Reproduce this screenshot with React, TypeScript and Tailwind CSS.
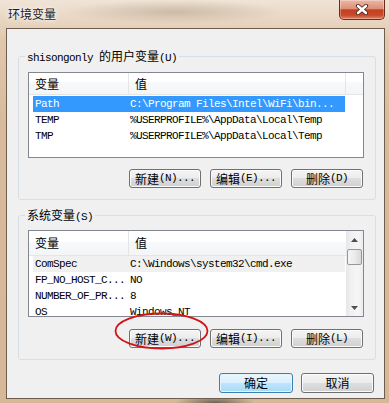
import React from "react";

const MONO = "font-['Liberation_Mono',monospace] text-[11px] tracking-[-0.6px]";
const CJK = "font-['Noto_Sans_CJK_SC',sans-serif] text-[12px]";

// ascii runs in mono, chinese runs in the CJK face (SimSun-ish widths)
function Txt({ s }: { s: string }) {
  const parts = s.match(/[\u3400-\u9fff]+|[^\u3400-\u9fff]+/g) ?? [];
  return (
    <>
      {parts.map((p, i) =>
        /[\u3400-\u9fff]/.test(p) ? (
          <span key={i} className={CJK}>
            {p}
          </span>
        ) : (
          <span key={i} className={MONO}>
            {p}
          </span>
        )
      )}
    </>
  );
}

function Btn({ label, primary = false, className = "" }: { label: string; primary?: boolean; className?: string }) {
  const look = primary
    ? "border-[#3c7fb1] bg-[linear-gradient(to_bottom,#eaf6fd_0%,#d9f0fc_50%,#bee6fd_50%,#a7d9f5_100%)] shadow-[inset_0_0_0_1px_#e4f4fd]"
    : "border-[#707070] bg-[linear-gradient(to_bottom,#f4f4f4_0%,#ececec_50%,#dedede_50%,#d0d0d0_100%)] shadow-[inset_0_0_0_1px_#fbfbfb]";
  return (
    <button
      type="button"
      className={`flex items-center justify-center rounded-[3px] border text-black leading-none whitespace-nowrap ${look} ${className}`}
    >
      <Txt s={label} />
    </button>
  );
}

function ScrollBar() {
  return (
    <div className="w-[17px] shrink-0 flex flex-col bg-[linear-gradient(to_right,#e6e6e6,#f1f1f1_30%,#f6f6f6_70%,#ececec)]">
      <div className="h-[17px] shrink-0 flex items-center justify-center">
        <svg width="7" height="4" viewBox="0 0 7 4">
          <path d="M0 4 L3.5 0 L7 4Z" fill="#505050" />
        </svg>
      </div>
      <div className="flex-1 pt-[1px]">
        <div className="mx-[1px] h-[16px] rounded-[2px] border border-[#979797] bg-[linear-gradient(to_right,#f5f5f5,#ebebeb_50%,#d9d9d9)]" />
      </div>
      <div className="h-[17px] shrink-0 flex items-center justify-center">
        <svg width="7" height="4" viewBox="0 0 7 4">
          <path d="M0 0 L3.5 4 L7 0Z" fill="#505050" />
        </svg>
      </div>
    </div>
  );
}

type Row = [string, string];

function VarList({
  rows,
  sel,
  active,
  scroll,
  heightCls,
  headerCls,
  rowsCls,
}: {
  rows: Row[];
  sel: number;
  active: boolean;
  scroll: boolean;
  heightCls: string;
  headerCls: string;
  rowsCls: string;
}) {
  return (
    <div className={`ml-[9px] w-[336px] ${heightCls} flex overflow-hidden border border-[#828790] bg-white`}>
      <div className="flex min-w-0 flex-1 flex-col">
        <div
          className={`flex shrink-0 ${headerCls} border-b border-[#e5e5e5] bg-[linear-gradient(to_bottom,#ffffff_0%,#ffffff_45%,#f8f9fa_45%,#f4f5f7_100%)]`}
        >
          <div className="flex w-[100px] items-center border-r border-[#e5e5e5] pl-[6px] leading-none">
            <span className={CJK}>变量</span>
          </div>
          <div
            className={`flex items-center pl-[6px] leading-none ${scroll ? "flex-1" : "w-[217px] border-r border-[#e5e5e5]"}`}
          >
            <span className={CJK}>值</span>
          </div>
        </div>
        <div className={rowsCls}>
          {rows.map(([n, v], i) => (
            <div
              key={n}
              className={`ml-[4px] flex h-[16px] w-[312px] items-center whitespace-nowrap leading-none ${
                i === sel ? (active ? "bg-[#3399ff] text-white" : "bg-[#f0f0f0] text-black") : "text-black"
              }`}
            >
              <div className={`w-[96px] shrink-0 pl-[2px] ${MONO}`}>{n}</div>
              <div className={`pl-[1px] ${MONO}`}>{v}</div>
            </div>
          ))}
        </div>
      </div>
      {scroll && <ScrollBar />}
    </div>
  );
}

const userRows: Row[] = [
  ["Path", "C:\\Program Files\\Intel\\WiFi\\bin..."],
  ["TEMP", "%USERPROFILE%\\AppData\\Local\\Temp"],
  ["TMP", "%USERPROFILE%\\AppData\\Local\\Temp"],
];

const sysRows: Row[] = [
  ["ComSpec", "C:\\Windows\\system32\\cmd.exe"],
  ["FP_NO_HOST_C...", "NO"],
  ["NUMBER_OF_PR...", "8"],
  ["OS", "Windows_NT"],
];

export default function App() {
  return (
    <div className="relative h-[403px] w-[389px] overflow-hidden bg-[radial-gradient(ellipse_40px_8px_at_215px_403px,#6d6058,transparent),radial-gradient(ellipse_110px_12px_at_175px_12px,#cdbba8,transparent),linear-gradient(to_bottom,#f0e4d7,#e0c8ad_40px,#d8bb9c_120px,#d6b797)]">
      {/* title bar */}
      <div className="flex h-[28px] items-start">
        <span className={`pl-[8px] pt-[6px] leading-[16px] text-[#1a1a1a] [text-shadow:0_0_6px_#fff,0_0_3px_#fff] ${CJK}`}>
          环境变量
        </span>
        <div className="ml-auto mr-[4px] flex h-[20px] w-[46px] items-center justify-center rounded-b-[5px] border border-t-0 border-[#6b2b1d] bg-[linear-gradient(to_bottom,#ecb8a4_0%,#dc9079_45%,#c6401f_52%,#c84a2a_80%,#e2845f_100%)] shadow-[inset_0_0_0_1px_rgba(255,255,255,0.3)]">
          <svg width="14" height="11" viewBox="0 0 14 11">
            <path d="M3 2 L11 9 M11 2 L3 9" stroke="#4a1d14" strokeWidth="4.2" strokeLinecap="round" />
            <path d="M3 2 L11 9 M11 2 L3 9" stroke="#ffffff" strokeWidth="2.6" strokeLinecap="round" />
          </svg>
        </div>
      </div>

      {/* client area */}
      <div className="ml-[6px] flex h-[371px] w-[379px] flex-col border border-[#6f5e50] bg-[#f0f0f0] pl-[11px] pr-[8px] pt-[19px]">
        <fieldset className="rounded-[3px] border border-[#d5dfe5] pb-[11px]">
          <legend className="ml-[6px] px-[2px] leading-[14px] text-black whitespace-nowrap">
            <Txt s="shisongonly 的用户变量(U)" />
          </legend>
          <div className="mt-[7px]">
            <VarList
              rows={userRows}
              sel={0}
              active
              scroll={false}
              heightCls="h-[86px]"
              headerCls="h-[22px]"
              rowsCls="pt-[1px]"
            />
          </div>
          <div className="ml-[9px] mt-[11px] flex w-[335px] justify-end gap-[9px]">
            <Btn label="新建(N)..." className="h-[19px] w-[72px]" />
            <Btn label="编辑(E)..." className="h-[19px] w-[72px]" />
            <Btn label="删除(D)" className="h-[19px] w-[72px]" />
          </div>
        </fieldset>

        <fieldset className="mt-[7px] rounded-[3px] border border-[#d5dfe5] pb-[11px]">
          <legend className="ml-[6px] px-[2px] leading-[14px] text-black whitespace-nowrap">
            <Txt s="系统变量(S)" />
          </legend>
          <div className="mt-[6px]">
            <VarList
              rows={sysRows}
              sel={0}
              active={false}
              scroll
              heightCls="h-[87px]"
              headerCls="h-[25px]"
              rowsCls="pt-0"
            />
          </div>
          <div className="ml-[9px] mt-[12px] flex w-[335px] justify-end gap-[9px]">
            <Btn label="新建(W)..." className="h-[19px] w-[72px]" />
            <Btn label="编辑(I)..." className="h-[19px] w-[72px]" />
            <Btn label="删除(L)" className="h-[19px] w-[72px]" />
          </div>
        </fieldset>

        <div className="mt-[13px] flex justify-end gap-[8px] pr-[2px]">
          <Btn label="确定" primary className="h-[20px] w-[74px]" />
          <Btn label="取消" className="h-[20px] w-[73px]" />
        </div>
      </div>

      {/* red annotation ring */}
      <svg className="absolute left-[113px] top-[311px]" width="98" height="40" viewBox="0 0 98 40">
        <ellipse cx="48.5" cy="20" rx="46" ry="17.5" fill="none" stroke="#d0141a" strokeWidth="1.8" />
      </svg>
    </div>
  );
}
